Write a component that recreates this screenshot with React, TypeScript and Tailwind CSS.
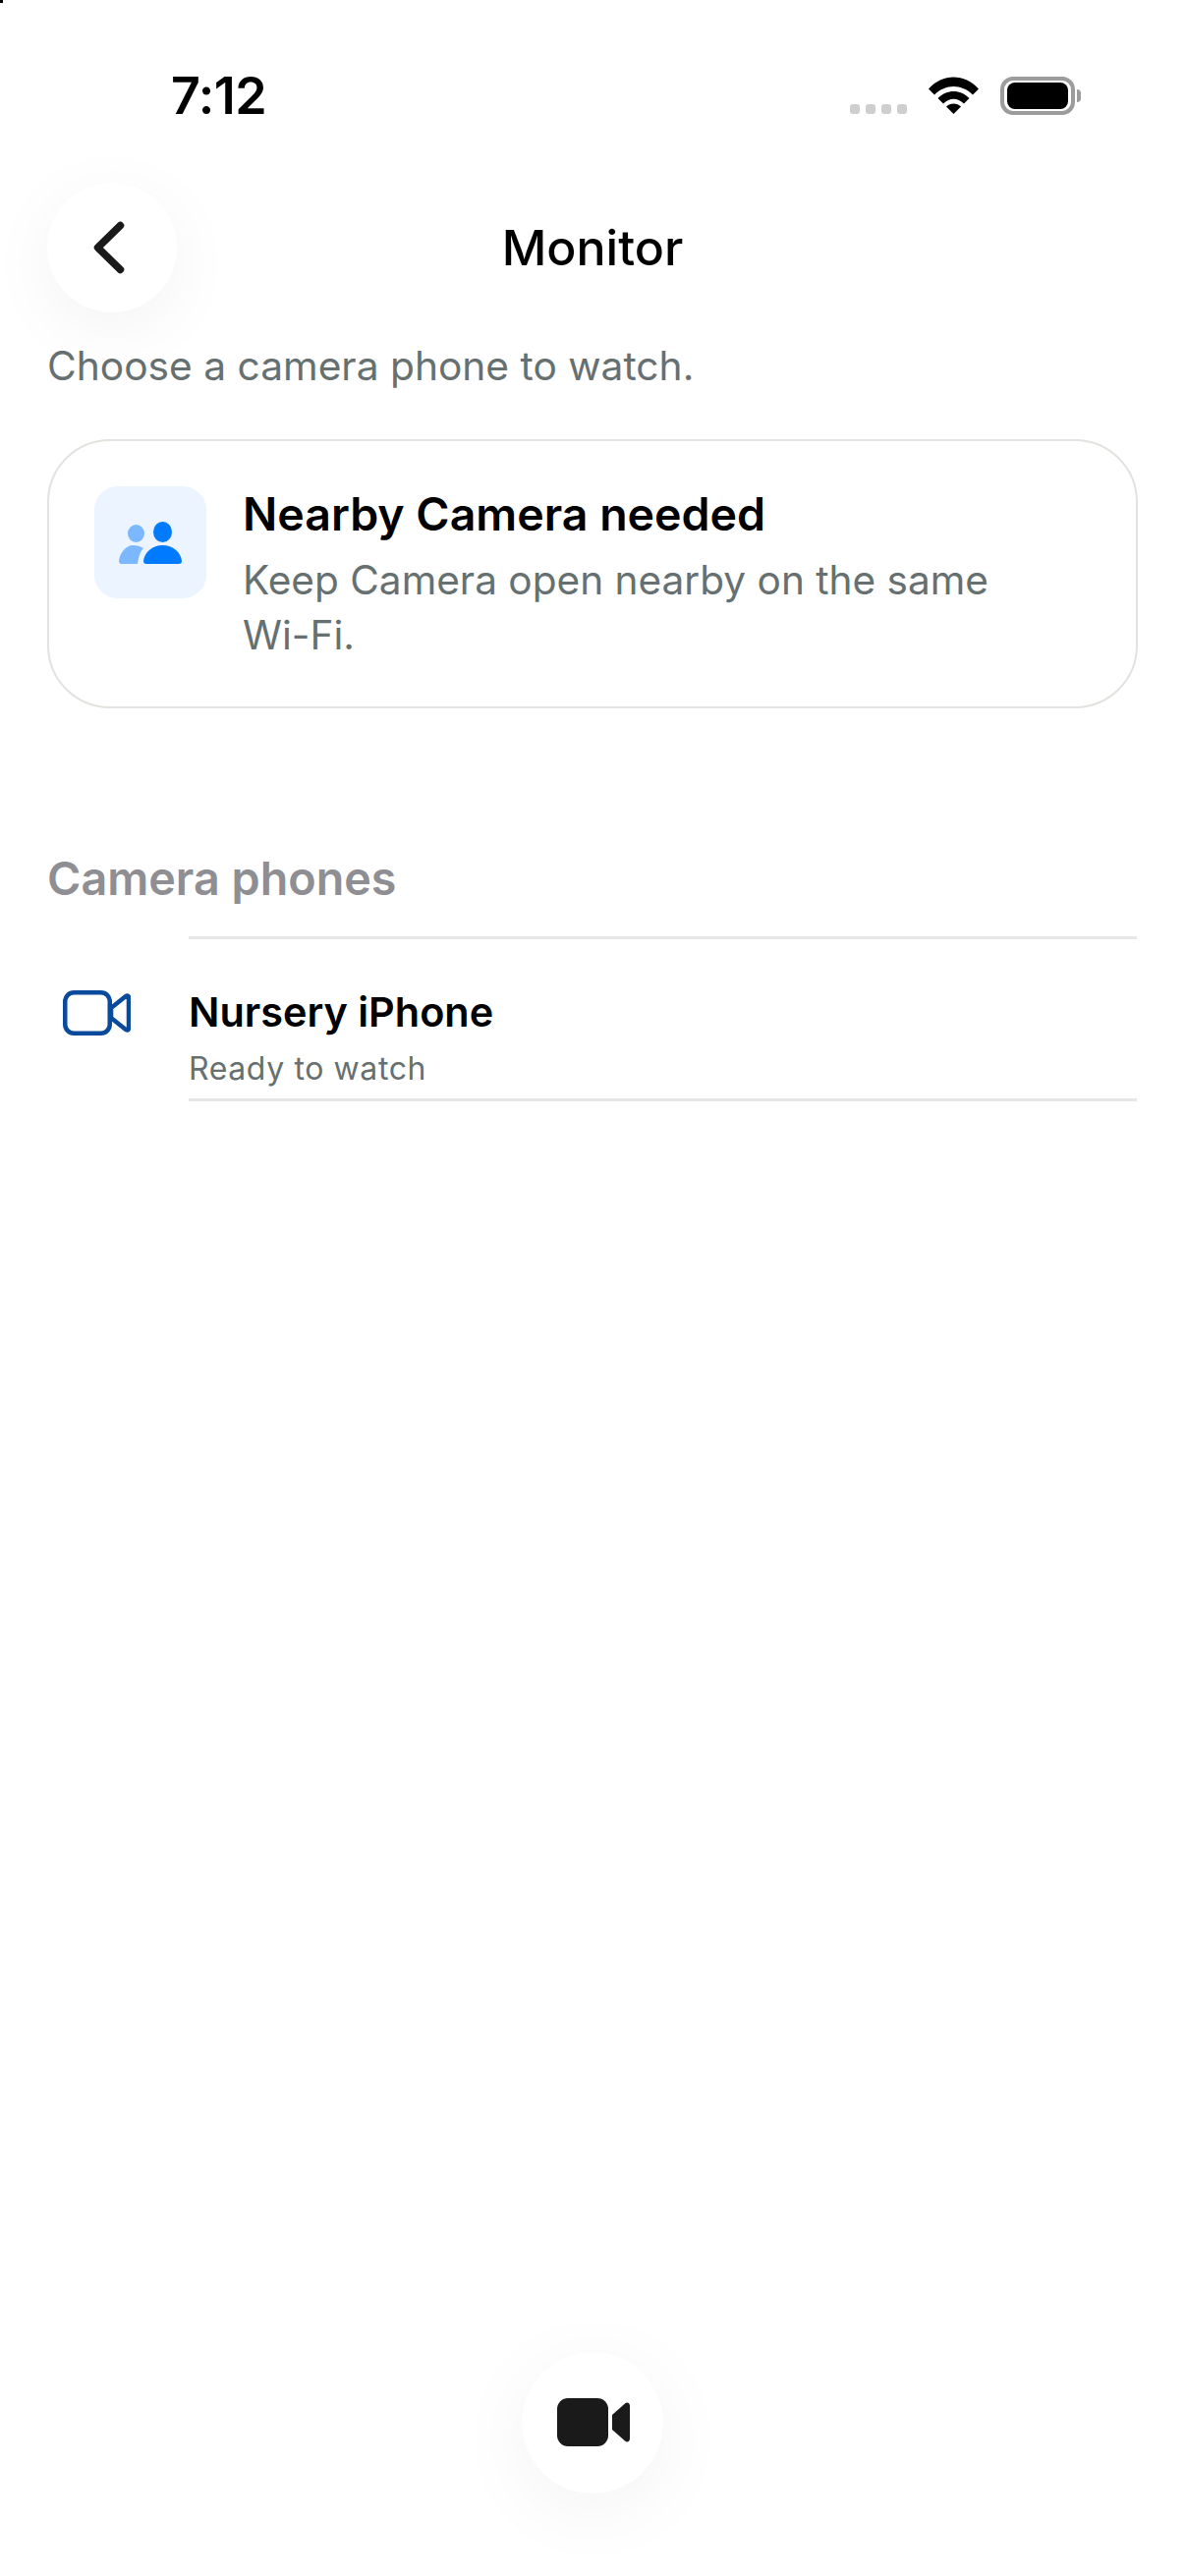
export default function App() {
  return (
    <div className="relative flex h-[2622px] w-[1206px] flex-col overflow-hidden bg-white font-['Inter','Liberation_Sans',sans-serif] text-black">
      <div className="absolute left-0 top-0 h-[3px] w-[3px] bg-black" />
      {/* status bar */}
      <div className="flex h-[186px] items-start justify-between pl-[174px] pr-[106px] pt-[69px]">
        <span className="text-[52px] font-semibold leading-[58px] tracking-[-0.5px]">7:12</span>
        <div className="flex items-start pt-[9px]">
          <div className="mr-[22px] mt-[28px] flex gap-[6px]">
            <span className="h-[10px] w-[10px] rounded-[3px] bg-[#cfcfcf]" />
            <span className="h-[10px] w-[10px] rounded-[3px] bg-[#cfcfcf]" />
            <span className="h-[10px] w-[10px] rounded-[3px] bg-[#cfcfcf]" />
            <span className="h-[10px] w-[10px] rounded-[3px] bg-[#cfcfcf]" />
          </div>
          <svg width="51" height="38" viewBox="0 0 51 38" className="mr-[22px]">
            <path d="M0 12.5C14-3.5 37-3.5 51 12.5L45 18.5C34 7 17 7 6 18.5Z" fill="#000" />
            <path d="M9.5 22C18.5 12.5 32.5 12.5 41.5 22L36 27.5C29.5 21 21.5 21 15 27.5Z" fill="#000" />
            <path d="M18 30.5C22 26.5 29 26.5 33 30.5L25.5 38Z" fill="#000" />
          </svg>
          <div className="flex items-center">
            <div className="flex h-[39px] w-[76px] items-center justify-center rounded-[13px] border-[4px] border-[#9c9c9c]">
              <div className="h-[27px] w-[62px] rounded-[8px] bg-black" />
            </div>
            <div className="ml-[2px] h-[13px] w-[4px] rounded-r-[4px] bg-[#9c9c9c]" />
          </div>
        </div>
      </div>

      {/* header */}
      <div className="relative flex h-[132px] items-center justify-center">
        <button className="absolute left-[48px] top-0 flex h-[132px] w-[132px] items-center justify-center rounded-full bg-white shadow-[0_16px_70px_rgba(0,0,0,0.05)]">
          <svg width="40" height="60" viewBox="0 0 40 60" fill="none" className="-ml-[8px]">
            <path d="M32.5 7.5 9.5 30l23 22.5" stroke="#1a1a1a" strokeWidth="7.5" strokeLinecap="round" strokeLinejoin="round" />
          </svg>
        </button>
        <h1 className="text-[50px] font-medium leading-[58px]">Monitor</h1>
      </div>

      {/* subtitle */}
      <p className="mt-[31px] px-[48px] text-[40.7px] leading-[48px] text-[#667070]">Choose a camera phone to watch.</p>

      {/* card */}
      <div className="mx-[48px] mt-[50px] flex h-[274px] gap-[38px] rounded-[64px] border-2 border-[#e2e2de] pl-[46px] pt-[46px]">
        <div className="flex h-[114px] w-[114px] shrink-0 items-center justify-center rounded-[24px] bg-[#ebf4ff]">
          <svg width="64" height="43" viewBox="0 0 64 43">
            <ellipse cx="17.5" cy="12" rx="8.5" ry="9" fill="#7cb8ff" />
            <path d="M0 40C1 31 8 24 14 24c4 0 8 1 11 3-3 3-5 8-6 16H3c-2 0-3-1-3-3Z" fill="#7cb8ff" />
            <ellipse cx="44.5" cy="10.5" rx="9.5" ry="10.5" fill="#007aff" />
            <path d="M28 43c-2 0-3-1-3-3C26 31 34 24 44.5 24S63 31 64 40c0 2-1 3-3 3Z" fill="#007aff" />
          </svg>
        </div>
        <div className="-ml-[1px] flex min-w-0 flex-col pt-[2px]">
          <div className="text-[46.5px] font-semibold leading-[52px]">Nearby Camera needed</div>
          <div className="mt-[14px] w-[800px] text-[40.6px] leading-[56px] text-[#667070]">Keep Camera open nearby on the same Wi-Fi.</div>
        </div>
      </div>

      {/* section */}
      <div className="ml-[48px] mt-[145px] text-[46.7px] font-semibold leading-[56px] text-[#8e8e93]">Camera phones</div>
      <div className="ml-[192px] mr-[49px] mt-[31px] h-[3px] bg-[#e6e6e6]" />
      <div className="flex h-[162px]">
        <div className="flex w-[192px] shrink-0 justify-start pl-[64px] pt-[52px]">
          <svg width="69" height="46" viewBox="0 0 69 46" fill="none" stroke="#0a4a9c" strokeWidth="4.5" strokeLinejoin="round">
            <rect x="2.25" y="2.25" width="45.5" height="41.5" rx="9" />
            <path d="M49 18 64 6c1.500-1 3-.5 3 1.500v31c0 2-1.500 2.500-3 1.500L49 28Z" />
          </svg>
        </div>
        <div className="flex flex-col pt-[48px]">
          <div className="text-[41.4px] font-semibold leading-[52px]">Nursery iPhone</div>
          <div className="mt-[12px] text-[32px] leading-[40px] tracking-[0.6px] text-[#667070]">Ready to watch</div>
        </div>
      </div>
      <div className="ml-[192px] mr-[49px] h-[3px] bg-[#e6e6e6]" />

      {/* fab */}
      <div className="mt-auto flex justify-center pb-[84px]">
        <button className="flex h-[144px] w-[144px] items-center justify-center rounded-full bg-white shadow-[0_16px_80px_rgba(0,0,0,0.05)]">
          <svg width="74" height="50" viewBox="0 0 74 50" className="ml-[2px]">
            <rect x="0" y="0" width="52" height="49" rx="11" fill="#1a1a1a" />
            <path d="M56 17 69 5.5c2.500-2 5-.5 5 2.500v33c0 3-2.500 4.500-5 2.500L56 32Z" fill="#1a1a1a" />
          </svg>
        </button>
      </div>
    </div>
  );
}
